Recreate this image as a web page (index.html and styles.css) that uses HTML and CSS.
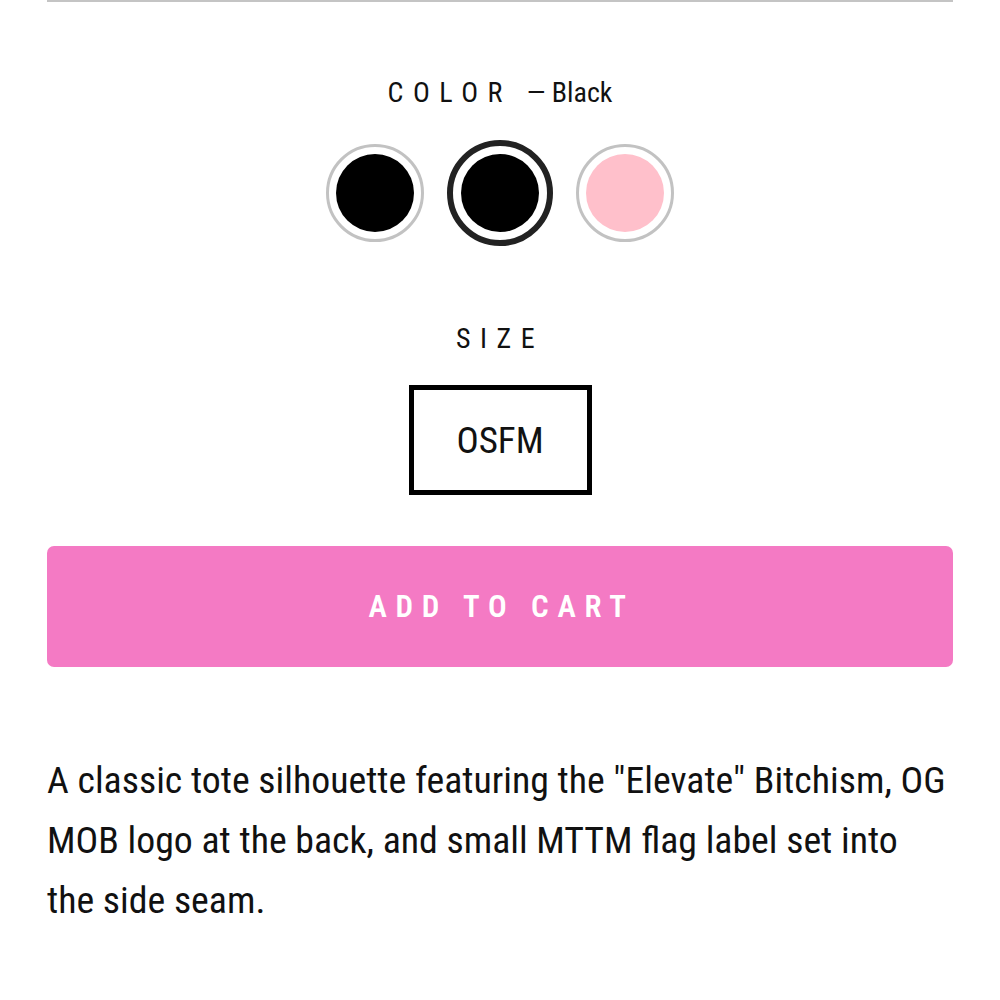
FILE: index.html
```html
<!DOCTYPE html>
<html>

<head>
  <meta charset="UTF-8">
  <title>Elevate Tote</title>
  <link rel="stylesheet" href="styles.css">
</head>

<body>

  <div class="producto">

    <div class="opcion">
      <p class="etiqueta">
        <span class="nombre">COLOR</span>
        <span class="valor">— Black</span>
      </p>
      <div class="muestras">
        <span class="muestra"><span class="relleno negro"></span></span>
        <span class="muestra activa"><span class="relleno negro"></span></span>
        <span class="muestra"><span class="relleno rosa"></span></span>
      </div>
    </div>

    <div class="opcion">
      <p class="etiqueta">
        <span class="nombre">SIZE</span>
      </p>
      <div class="tallas">
        <span class="talla">OSFM</span>
      </div>
    </div>

    <button class="carrito" type="button">ADD TO CART</button>

    <p class="descripcion">
      A classic tote silhouette featuring the "Elevate" Bitchism, OG MOB logo at the back, and small MTTM flag label set into the side seam.
    </p>

  </div>

</body>

</html>
```

FILE: styles.css
```css
body {
  margin: 0;
  background: #fff;
  color: #111;
  font-family: "Roboto", "Liberation Sans", sans-serif;
  font-stretch: condensed;
}

.producto {
  margin: 0 47px;
  border-top: 2px solid #c4c4c4;
}

.opcion {
  text-align: center;
}

.etiqueta {
  margin: 73px 0 0;
  font-size: 28px;
  line-height: 36px;
}

.nombre {
  letter-spacing: 0.34em;
}

.valor {
  margin-left: 8px;
}

.muestras {
  display: flex;
  justify-content: center;
  gap: 27px;
  margin-top: 33px;
}

.muestra {
  width: 98px;
  height: 98px;
  box-sizing: border-box;
  border: 3px solid #c2c2c2;
  border-radius: 50%;
  display: flex;
  align-items: center;
  justify-content: center;
}

.muestra.activa {
  border: 6px solid #222;
  width: 106px;
  height: 106px;
  margin: -4px;
}

.relleno {
  width: 78px;
  height: 78px;
  border-radius: 50%;
}

.negro {
  background: #000;
}

.rosa {
  background: #ffc0cb;
}

.opcion + .opcion .etiqueta {
  margin-top: 79px;
}

.tallas {
  display: flex;
  justify-content: center;
  margin-top: 28px;
}

.talla {
  width: 183px;
  height: 110px;
  box-sizing: border-box;
  border: 5px solid #000;
  display: flex;
  align-items: center;
  justify-content: center;
  font-size: 37px;
}

.carrito {
  display: block;
  width: 100%;
  height: 121px;
  margin-top: 51px;
  border: none;
  border-radius: 7px;
  background: #f47ac4;
  color: #fff;
  font-family: inherit;
  font-stretch: condensed;
  font-size: 31px;
  font-weight: 600;
  letter-spacing: 0.28em;
  text-indent: 0.1em;
}

.descripcion {
  margin: 83px 0 0;
  font-size: 37.8px;
  line-height: 60px;
}
```
